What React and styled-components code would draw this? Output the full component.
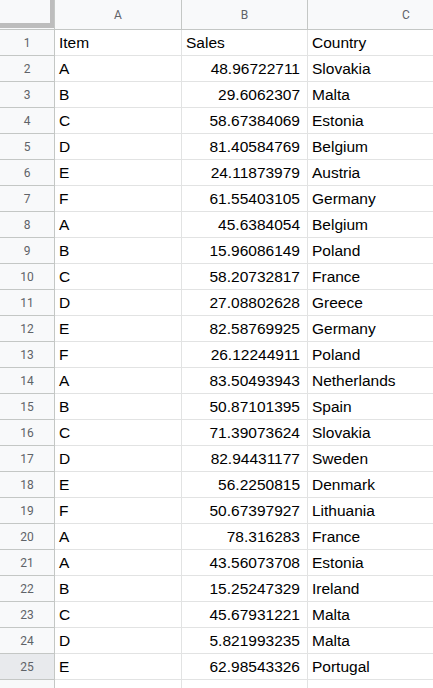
import React from "react";
import styled, { createGlobalStyle } from "styled-components";

const GlobalStyle = createGlobalStyle`
  html, body {
    margin: 0;
    padding: 0;
    background: #ffffff;
    overflow: hidden;
  }
`;

const rows = [
  ["Item", "Sales", "Country", true],
  ["A", "48.96722711", "Slovakia"],
  ["B", "29.6062307", "Malta"],
  ["C", "58.67384069", "Estonia"],
  ["D", "81.40584769", "Belgium"],
  ["E", "24.11873979", "Austria"],
  ["F", "61.55403105", "Germany"],
  ["A", "45.6384054", "Belgium"],
  ["B", "15.96086149", "Poland"],
  ["C", "58.20732817", "France"],
  ["D", "27.08802628", "Greece"],
  ["E", "82.58769925", "Germany"],
  ["F", "26.12244911", "Poland"],
  ["A", "83.50493943", "Netherlands"],
  ["B", "50.87101395", "Spain"],
  ["C", "71.39073624", "Slovakia"],
  ["D", "82.94431177", "Sweden"],
  ["E", "56.2250815", "Denmark"],
  ["F", "50.67397927", "Lithuania"],
  ["A", "78.316283", "France"],
  ["A", "43.56073708", "Estonia"],
  ["B", "15.25247329", "Ireland"],
  ["C", "45.67931221", "Malta"],
  ["D", "5.821993235", "Malta"],
  ["E", "62.98543326", "Portugal"],
  ["", "", ""],
];

const columns = [
  { label: "A", width: 127 },
  { label: "B", width: 126 },
  { label: "C", width: 197 },
];

const Sheet = styled.div`
  width: 433px;
  height: 688px;
  overflow: hidden;
  background: #ffffff;
`;

const HeaderRow = styled.div`
  display: flex;
  height: 30px;
  box-sizing: border-box;
  border-bottom: 1px solid #c4c7c5;
  background: #f8f9fa;
`;

const Corner = styled.div`
  width: 55px;
  flex: none;
  box-sizing: border-box;
  border-right: 1px solid #c4c7c5;
  position: relative;
  &::before {
    content: "";
    position: absolute;
    left: 0;
    top: 23px;
    width: 54px;
    height: 5px;
    background: #bdbdbd;
  }
  &::after {
    content: "";
    position: absolute;
    left: 50px;
    top: 0;
    width: 4px;
    height: 28px;
    background: #bdbdbd;
  }
`;

const ColHead = styled.div`
  width: ${(p) => p.$w}px;
  flex: none;
  box-sizing: border-box;
  border-right: 1px solid #c4c7c5;
  display: flex;
  align-items: center;
  justify-content: center;
  font-family: Roboto, "Liberation Sans", Arial, sans-serif;
  font-size: 12px;
  color: #5f6368;
  padding-top: 1px;
`;

const Row = styled.div`
  display: flex;
  height: 26px;
`;

const RowHead = styled.div`
  width: 55px;
  flex: none;
  box-sizing: border-box;
  border-right: 1px solid #c4c7c5;
  border-bottom: 1px solid #c4c7c5;
  background: ${(p) => (p.$active ? "#e8eaed" : "#f8f9fa")};
  display: flex;
  align-items: center;
  justify-content: center;
  font-family: Roboto, "Liberation Sans", Arial, sans-serif;
  font-size: 12px;
  color: #5f6368;
  padding-top: 1px;
`;

const Cell = styled.div`
  width: ${(p) => p.$w}px;
  flex: none;
  box-sizing: border-box;
  border-right: 1px solid #e2e3e3;
  border-bottom: 1px solid #e2e3e3;
  display: flex;
  align-items: center;
  justify-content: ${(p) => (p.$right ? "flex-end" : "flex-start")};
  padding: 1px 7px 0 4px;
  font-family: "Liberation Sans", Arial, sans-serif;
  font-size: 15.5px;
  color: #000000;
  white-space: nowrap;
  overflow: hidden;
`;

export default function App() {
  return (
    <Sheet>
      <GlobalStyle />
      <HeaderRow>
        <Corner />
        {columns.map((c) => (
          <ColHead key={c.label} $w={c.width}>
            {c.label}
          </ColHead>
        ))}
      </HeaderRow>
      {rows.map((r, i) => (
        <Row key={i}>
          <RowHead $active={i === 24}>{i < 25 ? i + 1 : ""}</RowHead>
          <Cell $w={columns[0].width}>{r[0]}</Cell>
          <Cell $w={columns[1].width} $right={!r[3]}>
            {r[1]}
          </Cell>
          <Cell $w={columns[2].width}>{r[2]}</Cell>
        </Row>
      ))}
    </Sheet>
  );
}
